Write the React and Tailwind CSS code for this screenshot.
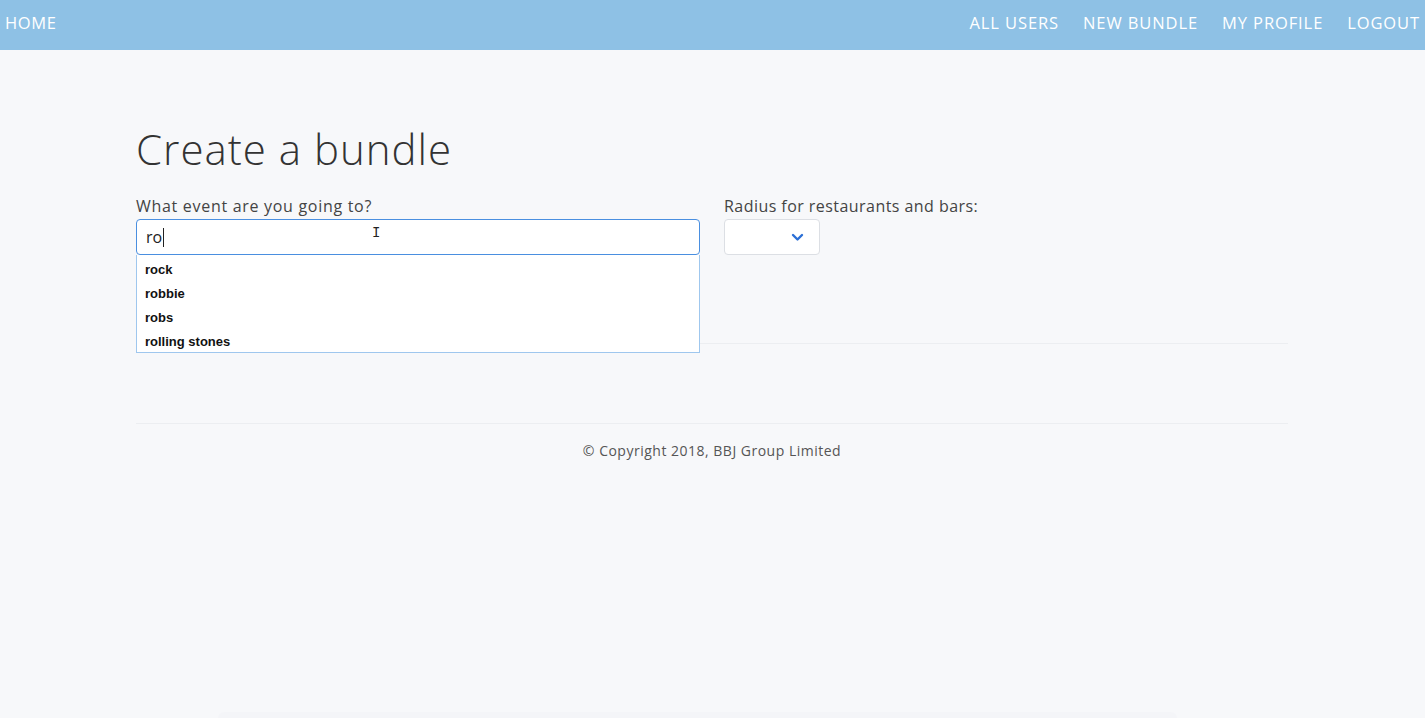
import React from "react";

export default function App() {
  const mont = { fontFamily: '"Open Sans", "DejaVu Sans", sans-serif' };
  return (
    <div className="min-h-[718px] bg-[#f7f8fa] relative overflow-hidden" style={mont}>
      <nav className="h-[50px] bg-[#8ec1e5] flex items-center justify-between pl-[5px] pr-[5px] pb-[4px] text-white text-[16.5px] tracking-[0.9px]">
        <a className="leading-none tracking-[0.6px]">HOME</a>
        <div className="flex gap-[24px]">
          <a>ALL USERS</a>
          <a>NEW BUNDLE</a>
          <a>MY PROFILE</a>
          <a>LOGOUT</a>
        </div>
      </nav>
      <main className="w-[1152px] ml-[136px] pt-[74px]">
        <h1 className="text-[42px] font-light text-[#333] leading-[50px] tracking-[1px]">Create a bundle</h1>
        <div className="flex gap-[24px] mt-[21px]">
          <div className="w-[564px]">
            <label className="block text-[16px] text-[#444] leading-[22px] mb-[2px] tracking-[0.7px]">What event are you going to?</label>
            <div className="relative">
              <div className="h-[36px] bg-white border border-[#4a8fe0] rounded-[4px] flex items-center pl-[9px] text-[16px] text-[#222]">
                ro<span className="inline-block w-px h-[19px] bg-[#222] ml-[1px]"></span>
              </div>
              <span className="absolute left-[236px] top-[4px] text-[#222] text-[14px]" style={{ fontFamily: '"Liberation Mono", monospace' }}>I</span>
              <ul className="h-[98px] overflow-hidden bg-white border border-[#9fc7ee] border-t-0 pt-[3px]" style={{ fontFamily: '"Liberation Sans", Arial, sans-serif' }}>
                {["rock", "robbie", "robs", "rolling stones"].map((s) => (
                  <li key={s} className="pl-[8px] h-[24px] leading-[24px] text-[13px] font-bold text-[#111]">{s}</li>
                ))}
              </ul>
            </div>
          </div>
          <div>
            <label className="block text-[16px] text-[#444] leading-[22px] mb-[2px] tracking-[0.45px]">Radius for restaurants and bars:</label>
            <div className="w-[96px] h-[36px] bg-white border border-[#dcdfe4] rounded-[4px] flex items-center justify-end pr-[15px]">
              <svg width="13" height="9" viewBox="0 0 13 9" fill="none">
                <path d="M2 2l4.5 4.5L11 2" stroke="#2b6fd6" strokeWidth="2.4" strokeLinecap="round" strokeLinejoin="round" />
              </svg>
            </div>
          </div>
        </div>
        <hr className="mt-[-10px] border-0 border-t border-[#eceef1]" />
        <hr className="mt-[79px] border-0 border-t border-[#eceef1]" />
        <p className="text-center text-[14px] text-[#555] mt-[16px] tracking-[0.5px]">© Copyright 2018, BBJ Group Limited</p>
      </main>
      <div className="absolute bottom-0 left-[218px] right-[248px] h-[6px] bg-[#f4f5f8] rounded-t-[10px]"></div>
    </div>
  );
}
